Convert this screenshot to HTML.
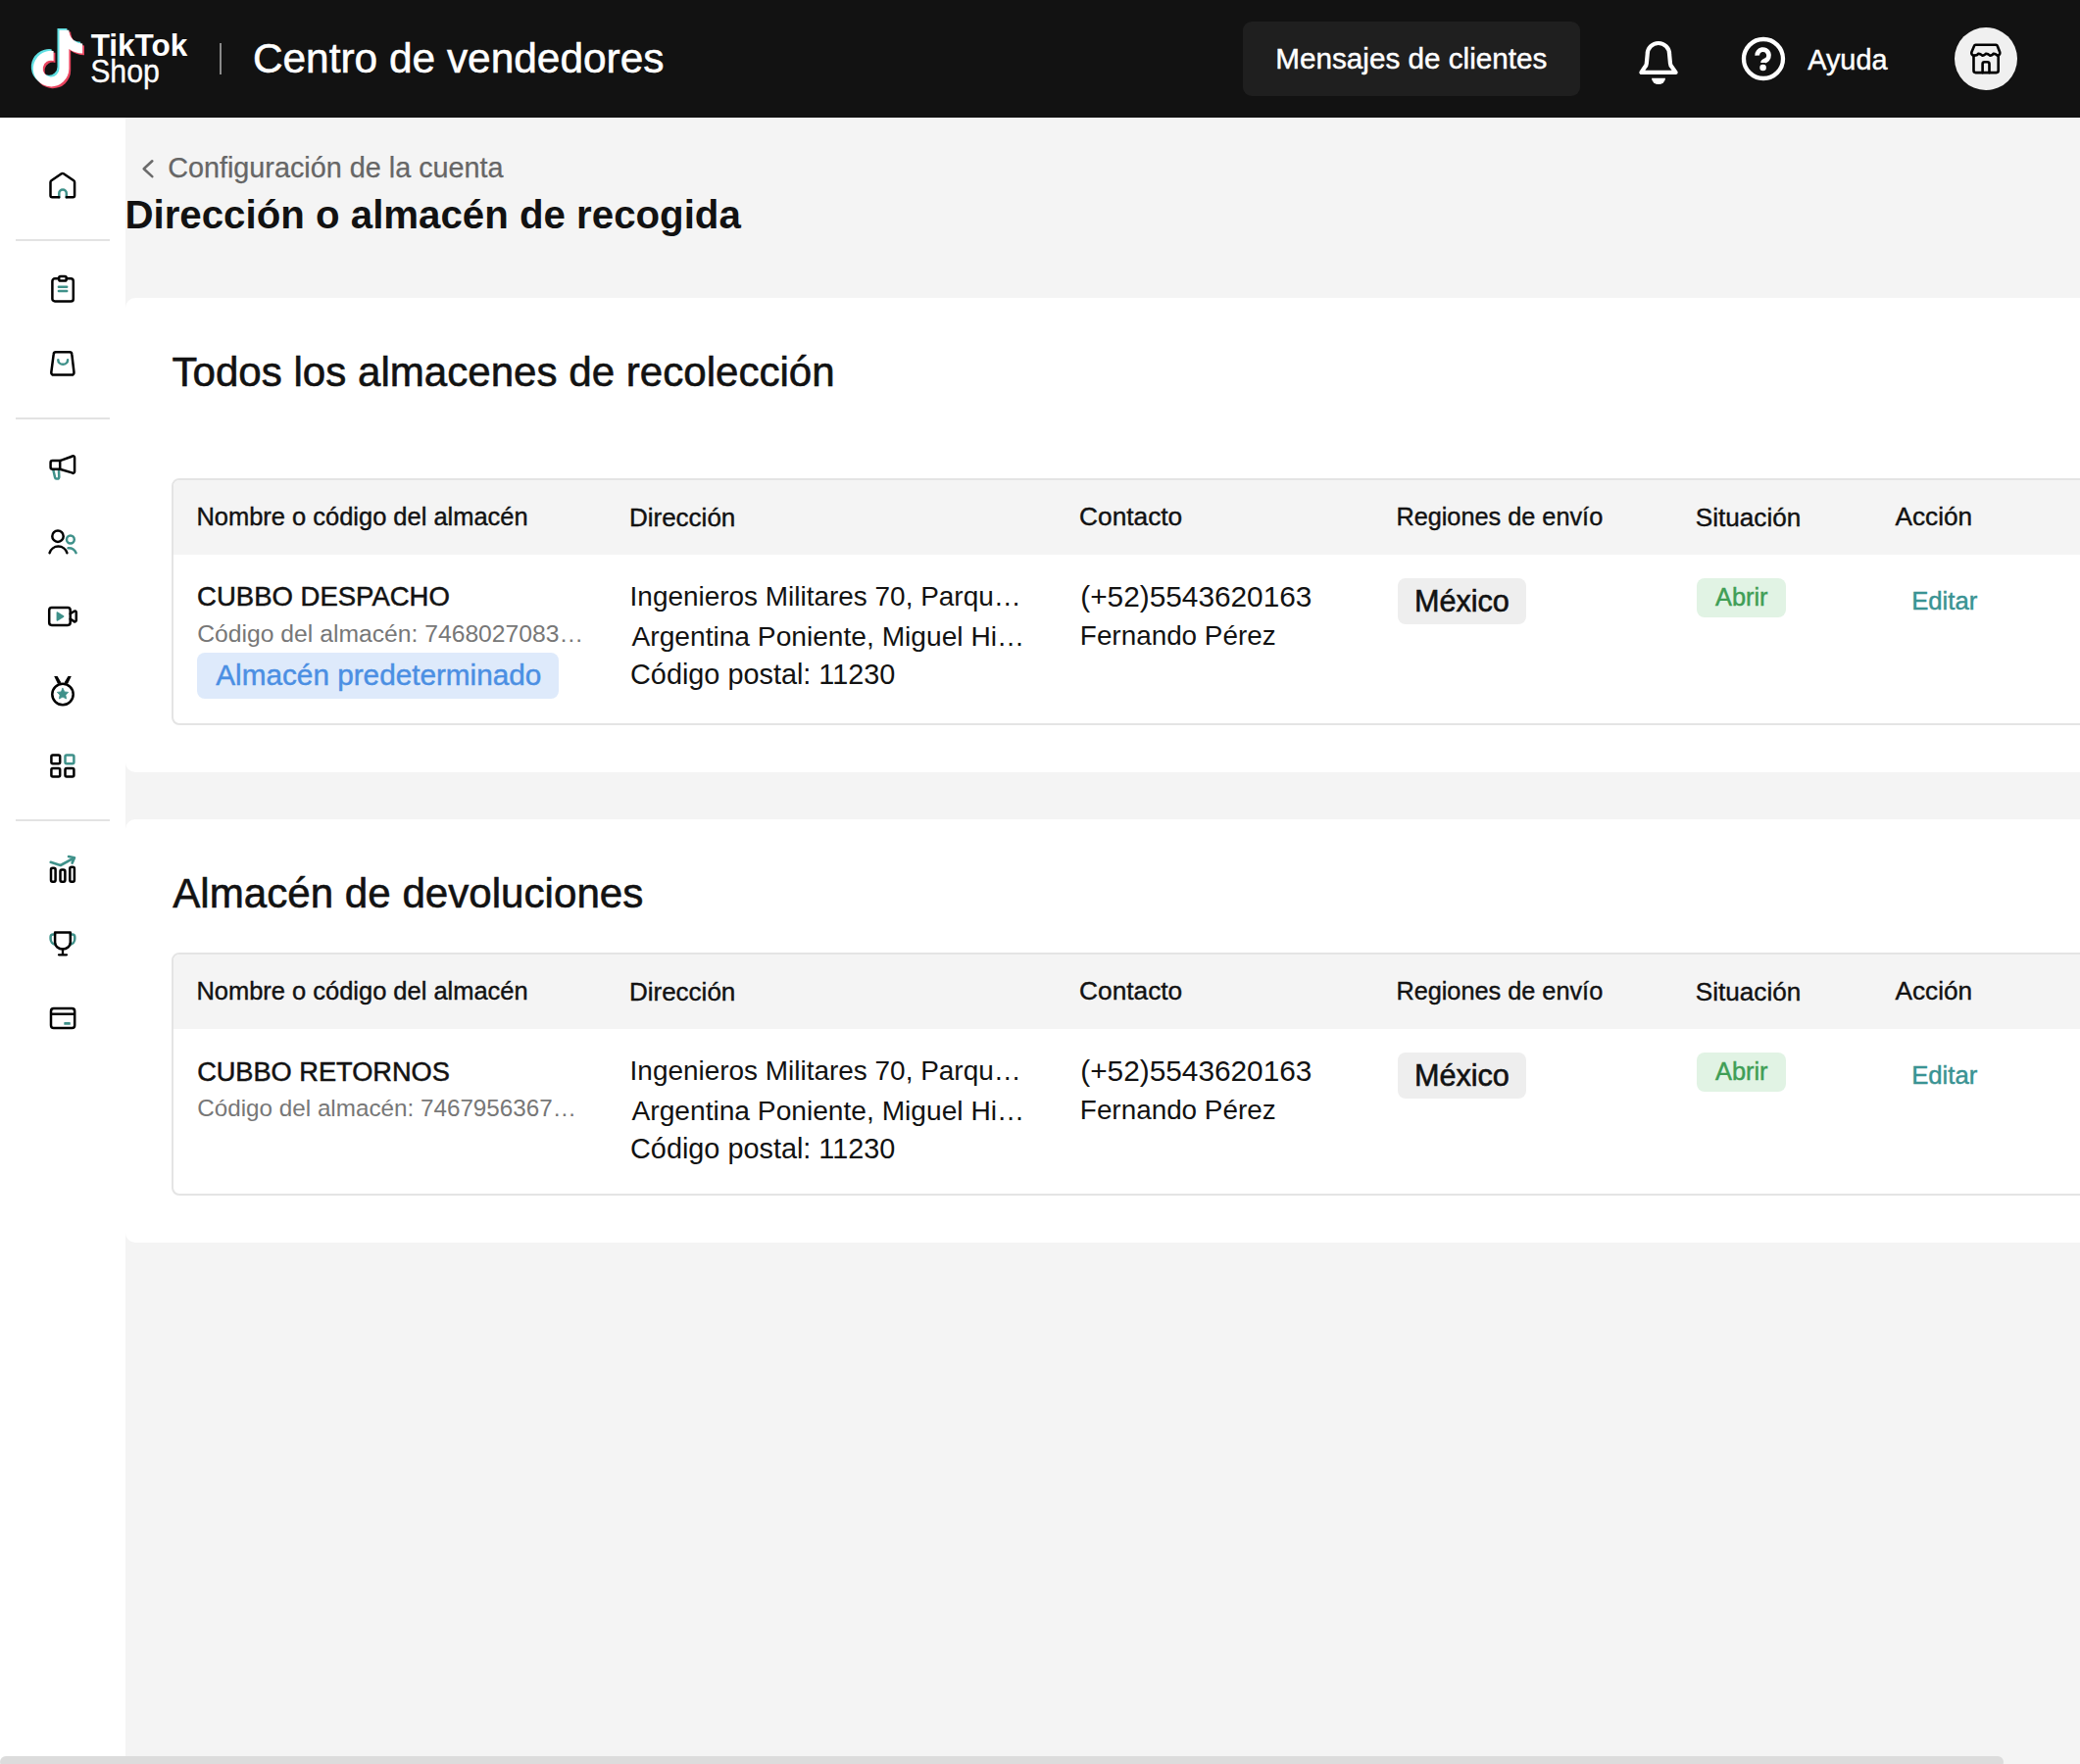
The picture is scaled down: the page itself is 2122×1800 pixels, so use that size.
<!DOCTYPE html>
<html><head><meta charset="utf-8">
<style>
*{margin:0;padding:0;box-sizing:border-box}
html,body{width:2122px;height:1800px;overflow:hidden;background:#f4f4f4;font-family:"Liberation Sans",sans-serif;color:#121212}
.a{position:absolute;white-space:nowrap;line-height:1}
#hdr{position:absolute;left:0;top:0;width:2122px;height:120px;background:#121212}
#side{position:absolute;left:0;top:120px;width:128px;height:1680px;background:#fff}
.dv{position:absolute;left:16px;width:96px;height:2px;background:#e3e3e3}
.card{position:absolute;left:128px;width:2100px;background:#fff;border-radius:10px}
.tbl{position:absolute;left:175px;width:2000px;border:2px solid #e4e4e4;border-radius:8px;overflow:hidden}
.th{position:absolute;left:0;top:0;width:100%;height:76px;background:#f4f4f4}
.tag{position:absolute;border-radius:8px}
</style></head>
<body>
<div id="hdr"></div>
<svg class="a" style="left:28px;top:26px" width="64" height="70" viewBox="0 0 64 70">
 <g transform="translate(3.8,3) scale(0.1125)"><path fill="#5fdfe2" d="M448 209.9a210.1 210.1 0 0 1 -122.8-39.3V349.4A162.6 162.6 0 1 1 185 188.3V278.2a74.6 74.6 0 1 0 52.2 71.2V0l88 0a121.2 121.2 0 0 0 1.9 22.2h0A122.2 122.2 0 0 0 381 102.4a121.4 121.4 0 0 0 67 20.1z"/></g>
 <g transform="translate(7.6,6.6) scale(0.1125)"><path fill="#e8455f" d="M448 209.9a210.1 210.1 0 0 1 -122.8-39.3V349.4A162.6 162.6 0 1 1 185 188.3V278.2a74.6 74.6 0 1 0 52.2 71.2V0l88 0a121.2 121.2 0 0 0 1.9 22.2h0A122.2 122.2 0 0 0 381 102.4a121.4 121.4 0 0 0 67 20.1z"/></g>
 <g transform="translate(5.8,4.8) scale(0.1125)"><path fill="#fff" d="M448 209.9a210.1 210.1 0 0 1 -122.8-39.3V349.4A162.6 162.6 0 1 1 185 188.3V278.2a74.6 74.6 0 1 0 52.2 71.2V0l88 0a121.2 121.2 0 0 0 1.9 22.2h0A122.2 122.2 0 0 0 381 102.4a121.4 121.4 0 0 0 67 20.1z"/></g>
</svg>
<div class="a" style="left:92.68px;top:31.41px;font-size:31.51px;color:#fff;font-weight:700;">TikTok</div>
<div class="a" style="left:92.14px;top:58.00px;font-size:30.31px;color:#fff;-webkit-text-stroke:0.3px #fff;transform:scaleY(1.11);transform-origin:0 49%;">Shop</div>
<div class="a" style="left:224px;top:44px;width:2px;height:32px;background:#8a8a8a"></div>
<div class="a" style="left:257.88px;top:38.76px;font-size:42.41px;color:#fff;-webkit-text-stroke:0.55px #fff;">Centro de vendedores</div>
<div class="a" style="left:1268px;top:22px;width:344px;height:76px;background:#1f1f1f;border-radius:9px"></div>
<div class="a" style="left:1301.33px;top:44.67px;font-size:29.66px;color:#fff;-webkit-text-stroke:0.45px #fff;">Mensajes de clientes</div>
<div class="a" style="left:1844.20px;top:46.75px;font-size:28.88px;color:#fff;-webkit-text-stroke:0.45px #fff;">Ayuda</div>
<div class="a" style="left:1994px;top:28px;width:64px;height:64px;border-radius:50%;background:#f0f0f0"></div>
<svg class="a" style="left:1660px;top:25px" width="180" height="75" viewBox="1660 25 180 75" fill="none" stroke="#fff" stroke-linecap="round" stroke-linejoin="round">
 <path d="M1674.4 73.9 H1709.6 L1705.6 68.3 a6 6 0 0 1 -1.6 -3.6 L1703.1 55.2 A11.2 11.2 0 0 0 1680.7 55.2 L1679.8 64.7 a6 6 0 0 1 -1.6 3.6 Z" stroke-width="4.2"/>
 <path d="M1685 79.8 H1699 A7 6.3 0 0 1 1685 79.8 Z" fill="#fff" stroke="none"/>
 <circle cx="1799" cy="60" r="20" stroke-width="4.3"/>
 <path d="M1792.7 56.6 A5.9 5.9 0 1 1 1801.6 61.6 Q1798.6 62.8 1798.6 64" stroke-width="4.8" stroke-linecap="butt"/>
 <circle cx="1798.6" cy="69" r="3.3" fill="#fff" stroke="none"/>
</svg>
<svg class="a" style="left:1994px;top:28px" width="64" height="64" viewBox="1994 28 64 64" fill="none" stroke="#000" stroke-width="2.6" stroke-linecap="round" stroke-linejoin="round">
 <path d="M2015.5 45.7 H2036.3 a1.5 1.5 0 0 1 1.4 1 L2040.2 53.2 a3 3 0 0 1 -1.2 3.2 Q2038.2 56.9 2037.3 56.3 Q2035.5 54.6 2033.6 54.9 Q2031.8 57.1 2029.8 56.4 Q2027.9 54.6 2025.9 54.9 Q2024 57.1 2022 56.4 Q2020.1 54.6 2018.2 54.9 Q2016.6 57 2015 56.3 Q2013.9 57 2012.6 56.4 a3 3 0 0 1 -1.2 -3.2 L2014.1 46.7 a1.5 1.5 0 0 1 1.4 -1 Z"/>
 <path d="M2013.5 57 V72.1 a2 2 0 0 0 2 2 H2036.7 a2 2 0 0 0 2 -2 V57"/>
 <path d="M2022.6 74.1 V65.3 a2 2 0 0 1 2 -2 H2027.5 a2 2 0 0 1 2 2 V74.1"/>
</svg>
<div id="side">
 <div class="dv" style="top:124px"></div>
 <div class="dv" style="top:306px"></div>
 <div class="dv" style="top:716px"></div>
</div>
<svg class="a" style="left:0;top:0" width="128" height="1100" viewBox="0 0 128 1100" fill="none" stroke-linecap="round" stroke-linejoin="round">
<g stroke="#3f918a" stroke-width="2.5">
 <path d="M60.3 201.2 V197.3 a3.75 3.75 0 0 1 7.5 0 V201.2"/>
 <path d="M59.9 292.8 H68.2 M59.9 297.1 H68.2"/>
 <path d="M59.3 367.2 A4.9 4.6 0 0 0 69.1 367.2"/>
 <path d="M54.4 479.8 L56.1 487.3 a1.5 1.5 0 0 0 1.5 1.2 H58.8 a1.5 1.5 0 0 0 1.5 -1.6 L60 479.8"/>
 <circle cx="71.9" cy="550.5" r="3.9"/>
 <path d="M69.5 559.3 A8.2 8.2 0 0 1 77.6 564.2"/>
 <rect x="66.5" y="770.4" width="8.9" height="8.9" rx="1.5"/>
 <path d="M51.7 879.8 L61.7 883 L75.2 875.7 M70 874 L76 875.3 L73.6 880.6" stroke-width="2.6"/>
 <path d="M56.1 953.4 H54.2 a2.6 2.6 0 0 0 -2.6 2.6 V958 a5.8 5.8 0 0 0 5 5.8 M71.8 953.4 H73.7 a2.6 2.6 0 0 1 2.6 2.6 V958 a5.8 5.8 0 0 1 -5 5.8"/>
</g>
<g stroke="#000" stroke-width="2.5">
 <path d="M60.2 201.2 H53.3 a1.8 1.8 0 0 1 -1.8 -1.8 V186 a2 2 0 0 1 0.9 -1.7 L62.7 177.3 a2 2 0 0 1 2.2 0 L75.2 184.3 a2 2 0 0 1 0.9 1.7 V199.4 a1.8 1.8 0 0 1 -1.8 1.8 H67.8"/>
 <path d="M59.8 284.3 H56 a2.6 2.6 0 0 0 -2.6 2.6 V304.9 a2.6 2.6 0 0 0 2.6 2.6 H72.2 a2.6 2.6 0 0 0 2.6 -2.6 V286.9 a2.6 2.6 0 0 0 -2.6 -2.6 H68"/>
 <rect x="60.2" y="282" width="7.5" height="4.6" rx="1.6"/>
 <path d="M57 359.3 H71 a2.3 2.3 0 0 1 2.3 2.1 L75.5 380 a2.4 2.4 0 0 1 -2.4 2.6 H54.7 a2.4 2.4 0 0 1 -2.4 -2.6 L54.7 361.4 a2.3 2.3 0 0 1 2.3 -2.1 Z"/>
 <path d="M61.2 470.1 H53.6 a2 2 0 0 0 -2 2 V476.7 a2 2 0 0 0 2 2 H61.2 Z"/>
 <path d="M61.2 470.1 L73.4 465.7 a1.6 1.6 0 0 1 2.7 1.2 V481.2 a1.6 1.6 0 0 1 -2.7 1.2 L61.2 478.7"/>
 <circle cx="59" cy="547.2" r="5.7"/>
 <path d="M50.6 564.2 A9.3 9.3 0 0 1 68.4 564.2"/>
 <rect x="50.2" y="620.1" width="21.5" height="17.8" rx="2.6"/>
 <path d="M71.7 626.3 L75.6 623.8 a1.4 1.4 0 0 1 2.2 1.2 V632.9 a1.4 1.4 0 0 1 -2.2 1.2 L71.7 631.6"/>
 <circle cx="64" cy="708.5" r="10.7"/>
 <rect x="52.4" y="770.4" width="8.8" height="8.9" rx="1.5"/>
 <rect x="52.4" y="784" width="8.8" height="8.6" rx="1.5"/>
 <rect x="66.5" y="784" width="8.9" height="8.6" rx="1.5"/>
 <rect x="52" y="885.8" width="4.6" height="13.9" rx="1.6"/>
 <rect x="61.5" y="887.6" width="4.9" height="12.1" rx="1.6"/>
 <rect x="71.3" y="884.7" width="4.6" height="15" rx="1.6"/>
 <path d="M56.1 951.6 H71.8 V961.6 A7.85 7 0 0 1 56.1 961.6 Z"/>
 <path d="M64 968.6 V974.3 M60 974.3 H68" stroke-width="2.3"/>
 <rect x="52" y="1029.1" width="24.2" height="19.9" rx="2.8"/>
 <path d="M52.5 1034.7 H75.7"/>
</g>
<g fill="#3f918a">
 <path d="M64 702.3 L65.8 705.9 L69.7 706.4 L66.9 709.1 L67.6 713 L64 711.1 L60.4 713 L61.1 709.1 L58.3 706.4 L62.2 705.9 Z" stroke="#3f918a" stroke-width="0.8" stroke-linejoin="round"/>
 <path d="M57.6 625.2 a0.9 0.9 0 0 1 1.4 -0.8 L65 628.3 a0.9 0.9 0 0 1 0 1.5 L59 633.6 a0.9 0.9 0 0 1 -1.4 -0.8 Z"/>
 <rect x="65.3" y="1043.1" width="6.5" height="2.7" rx="0.6"/>
 <path fill="#000" d="M55.2 690 H58.6 L62.4 696.6 L59 698 Z M72.8 690 H69.4 L65.6 696.6 L69 698 Z"/>
</g>
</svg>
<svg class="a" style="left:140px;top:160px" width="22" height="24" viewBox="0 0 22 24"><path d="M15.3 4.3 L6.7 12.2 L15.3 20.1" fill="none" stroke="#6b6b6b" stroke-width="2.6" stroke-linecap="round" stroke-linejoin="round"/></svg>
<div class="a" style="left:171.16px;top:156.75px;font-size:28.79px;color:#666;-webkit-text-stroke:0.25px #666;">Configuración de la cuenta</div>
<div class="a" style="left:127.48px;top:200.22px;font-size:40.24px;color:#121212;font-weight:700;">Dirección o almacén de recogida</div>
<div class="card" style="top:304px;height:484px"></div>
<div class="a" style="left:175.46px;top:359.13px;font-size:42.10px;color:#121212;-webkit-text-stroke:0.6px #121212;">Todos los almacenes de recolección</div>
<div class="tbl" style="top:488px;height:252px"><div class="th"></div></div>
<div class="card" style="top:836px;height:432px"></div>
<div class="a" style="left:176.25px;top:891.16px;font-size:42.14px;color:#121212;-webkit-text-stroke:0.6px #121212;">Almacén de devoluciones</div>
<div class="tbl" style="top:972px;height:248px"><div class="th"></div></div>
<div class="a" style="left:200.46px;top:514.84px;font-size:25.46px;color:#121212;-webkit-text-stroke:0.4px #121212;">Nombre o código del almacén</div>
<div class="a" style="left:641.92px;top:514.56px;font-size:26.02px;color:#121212;-webkit-text-stroke:0.4px #121212;">Dirección</div>
<div class="a" style="left:1101.09px;top:514.44px;font-size:26.27px;color:#121212;-webkit-text-stroke:0.4px #121212;">Contacto</div>
<div class="a" style="left:1424.38px;top:514.92px;font-size:25.29px;color:#121212;-webkit-text-stroke:0.4px #121212;">Regiones de envío</div>
<div class="a" style="left:1729.82px;top:514.50px;font-size:26.14px;color:#121212;-webkit-text-stroke:0.4px #121212;">Situación</div>
<div class="a" style="left:1933.50px;top:514.47px;font-size:26.20px;color:#121212;-webkit-text-stroke:0.4px #121212;">Acción</div>
<div class="a" style="left:201.12px;top:595.48px;font-size:27.50px;color:#121212;-webkit-text-stroke:0.5px #121212;">CUBBO DESPACHO</div>
<div class="a" style="left:201.27px;top:635.01px;font-size:24.69px;color:#777;">Código del almacén: 7468027083…</div>
<div class="tag" style="left:201px;top:666px;width:368.6px;height:47.3px;background:#deeafb"></div>
<div class="a" style="left:220.30px;top:673.94px;font-size:29.72px;color:#4b8fe3;-webkit-text-stroke:0.45px #4b8fe3;">Almacén predeterminado</div>
<div class="a" style="left:642.59px;top:595.27px;font-size:27.94px;color:#121212;">Ingenieros Militares 70, Parqu…</div>
<div class="a" style="left:644.50px;top:635.36px;font-size:28.17px;color:#121212;">Argentina Poniente, Miguel Hi…</div>
<div class="a" style="left:643.06px;top:674.38px;font-size:28.83px;color:#121212;">Código postal: 11230</div>
<div class="a" style="left:1102.31px;top:594.30px;font-size:29.81px;color:#121212;">(+52)5543620163</div>
<div class="a" style="left:1101.87px;top:635.35px;font-size:27.87px;color:#121212;">Fernando Pérez</div>
<div class="tag" style="left:1426px;top:590.2px;width:131px;height:47.3px;background:#eeeeee"></div>
<div class="a" style="left:1442.95px;top:597.96px;font-size:30.61px;color:#121212;-webkit-text-stroke:0.6px #121212;">México</div>
<div class="tag" style="left:1731px;top:590.2px;width:90.7px;height:39.6px;background:#e1f3e4"></div>
<div class="a" style="left:1750.00px;top:597.22px;font-size:25.39px;color:#3f9e55;-webkit-text-stroke:0.45px #3f9e55;">Abrir</div>
<div class="a" style="left:1950.15px;top:600.93px;font-size:25.69px;color:#3a9393;-webkit-text-stroke:0.45px #3a9393;">Editar</div>
<div class="a" style="left:200.46px;top:998.84px;font-size:25.46px;color:#121212;-webkit-text-stroke:0.4px #121212;">Nombre o código del almacén</div>
<div class="a" style="left:641.92px;top:998.56px;font-size:26.02px;color:#121212;-webkit-text-stroke:0.4px #121212;">Dirección</div>
<div class="a" style="left:1101.09px;top:998.44px;font-size:26.27px;color:#121212;-webkit-text-stroke:0.4px #121212;">Contacto</div>
<div class="a" style="left:1424.38px;top:998.92px;font-size:25.29px;color:#121212;-webkit-text-stroke:0.4px #121212;">Regiones de envío</div>
<div class="a" style="left:1729.82px;top:998.50px;font-size:26.14px;color:#121212;-webkit-text-stroke:0.4px #121212;">Situación</div>
<div class="a" style="left:1933.50px;top:998.47px;font-size:26.20px;color:#121212;-webkit-text-stroke:0.4px #121212;">Acción</div>
<div class="a" style="left:201.14px;top:1079.64px;font-size:27.18px;color:#121212;-webkit-text-stroke:0.5px #121212;">CUBBO RETORNOS</div>
<div class="a" style="left:201.29px;top:1119.23px;font-size:24.24px;color:#777;">Código del almacén: 7467956367…</div>
<div class="a" style="left:642.59px;top:1079.27px;font-size:27.94px;color:#121212;">Ingenieros Militares 70, Parqu…</div>
<div class="a" style="left:644.50px;top:1119.36px;font-size:28.17px;color:#121212;">Argentina Poniente, Miguel Hi…</div>
<div class="a" style="left:643.06px;top:1158.38px;font-size:28.83px;color:#121212;">Código postal: 11230</div>
<div class="a" style="left:1102.31px;top:1078.30px;font-size:29.81px;color:#121212;">(+52)5543620163</div>
<div class="a" style="left:1101.87px;top:1119.35px;font-size:27.87px;color:#121212;">Fernando Pérez</div>
<div class="tag" style="left:1426px;top:1074.2px;width:131px;height:47.3px;background:#eeeeee"></div>
<div class="a" style="left:1442.95px;top:1081.96px;font-size:30.61px;color:#121212;-webkit-text-stroke:0.6px #121212;">México</div>
<div class="tag" style="left:1731px;top:1074.2px;width:90.7px;height:39.6px;background:#e1f3e4"></div>
<div class="a" style="left:1750.00px;top:1081.22px;font-size:25.39px;color:#3f9e55;-webkit-text-stroke:0.45px #3f9e55;">Abrir</div>
<div class="a" style="left:1950.15px;top:1084.93px;font-size:25.69px;color:#3a9393;-webkit-text-stroke:0.45px #3a9393;">Editar</div>
<div class="a" style="left:0;top:1792px;width:2044px;height:12px;background:#dcdcdc;border-radius:6px"></div>
</body></html>
